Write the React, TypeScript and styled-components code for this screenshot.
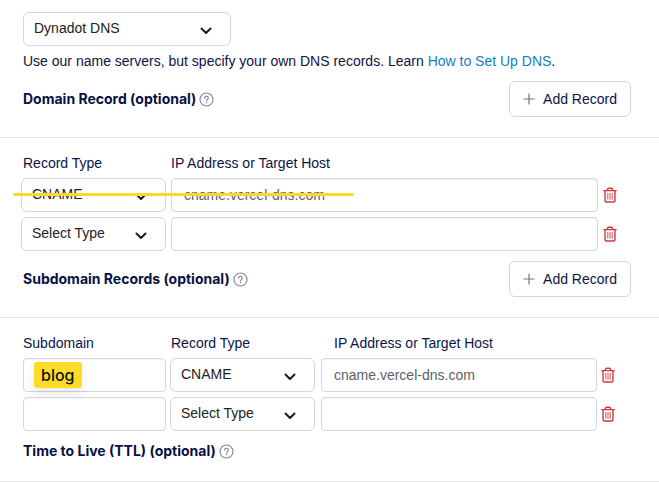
import React from "react";
import styled, { createGlobalStyle } from "styled-components";

const GlobalStyle = createGlobalStyle`
  *, *::before, *::after { box-sizing: border-box; }
  body {
    margin: 0;
    background: #fff;
    color: #0b1446;
    font: 14px/20px "Liberation Sans", Arial, sans-serif;
  }
  button, input, select { font: inherit; }
`;

const Page = styled.main`
  display: flow-root;
`;

const Section = styled.section<{ $top: number; $bottom: number }>`
  padding: ${(p) => p.$top}px 28px ${(p) => p.$bottom}px 23px;
  border-bottom: 1px solid #e2e4e7;
`;

const Help = styled.p`
  margin: 5px 0 10px;
  white-space: nowrap;
`;

const Link = styled.a`
  color: #1580bd;
  text-decoration: none;
`;

const TitleBar = styled.div`
  display: flex;
  align-items: center;
  justify-content: space-between;
`;

const Title = styled.h2`
  display: flex;
  align-items: center;
  gap: 3px;
  margin: 0;
  font: 700 14px/20px Inter, sans-serif;
  color: #051244;
  white-space: nowrap;
`;

const HelpButton = styled.button`
  display: flex;
  padding: 0;
  border: 0;
  background: none;
  color: #858b9b;
`;

const AddButton = styled.button`
  display: flex;
  align-items: center;
  gap: 8px;
  height: 36px;
  padding: 0 13px;
  border: 1px solid #d3d8dc;
  border-radius: 6px;
  background: #fff;
  color: #0b1446;
  white-space: nowrap;
`;

const SelectBox = styled.span<{ $width?: number }>`
  display: grid;
  align-items: center;
  width: ${(p) => (p.$width ? `${p.$width}px` : "100%")};
  & > * { grid-area: 1 / 1; }
  & > svg {
    justify-self: end;
    margin: 3px 19px 0 0;
    pointer-events: none;
  }
`;

const Select = styled.select`
  appearance: none;
  width: 100%;
  height: 34px;
  padding: 0 36px 2px 10px;
  border: 1px solid #d3d8dc;
  border-radius: 6px;
  background: #fff;
  color: #222;
`;

const Field = styled.input`
  width: 100%;
  min-width: 0;
  height: 34px;
  padding: 0 12px;
  border: 1px solid #d3d8dc;
  border-radius: 4px;
  background: #fff;
  box-shadow: inset 0 1px 1px #0000000d;
  color: #5c5f66;
`;

const Records = styled.div`
  display: grid;
  row-gap: 5px;
  margin-bottom: 10px;
`;

const DomainRow = styled.div`
  position: relative;
  display: grid;
  grid-template-columns: 145px 1fr 14px;
  column-gap: 5px;
  align-items: center;
  margin: 0 14px 0 -2px;
`;

const SubdomainRow = styled.div`
  display: grid;
  grid-template-columns: 143px 145px 1fr 14px;
  column-gap: 4px;
  align-items: center;
  margin-right: 16px;
  & > :nth-child(3) { margin-left: 2px; width: calc(100% - 2px); }
`;

const Labels = styled.div<{ $columns: string }>`
  display: grid;
  grid-template-columns: ${(p) => p.$columns};
  margin-bottom: 5px;
`;

const DeleteButton = styled.button`
  display: flex;
  padding: 0;
  border: 0;
  background: none;
  color: #cf3a40;
`;

const StrikeMark = styled.span`
  position: absolute;
  left: -8px;
  top: 15px;
  width: 341px;
  height: 3px;
  border-radius: 2px;
  background: #fbd72f;
  pointer-events: none;
`;

const MarkedCell = styled.span`
  position: relative;
`;

const Highlight = styled.mark`
  position: absolute;
  left: 11px;
  top: 4px;
  padding: 1px 7px;
  border-radius: 3px;
  background: #ffdd26;
  box-shadow: 0 8px 12px #00000014;
  color: #111;
  font: 500 16px/24px Inter, sans-serif;
  pointer-events: none;
`;

const Chevron = () => (
  <svg width="12" height="8" viewBox="0 0 12 8" fill="none" stroke="#1d1d1f" strokeWidth="2" strokeLinecap="round" strokeLinejoin="round" aria-hidden="true">
    <path d="M1.5 1.5 6 6l4.500-4.500" />
  </svg>
);

const Plus = () => (
  <svg width="12" height="12" viewBox="0 0 12 12" stroke="#70768b" strokeWidth="1.200" aria-hidden="true">
    <path d="M6 .5v11M.5 6h11" />
  </svg>
);

const Question = () => (
  <svg width="15" height="15" viewBox="0 0 15 15" fill="none" stroke="currentColor" strokeLinecap="round" aria-hidden="true">
    <circle cx="7.500" cy="7.500" r="6.500" strokeWidth="1.200" />
    <path d="M5.700 6.100a1.800 1.800 0 1 1 2.900 1.400c-.7.500-1.100.8-1.100 1.400" strokeWidth="1.200" />
    <circle cx="7.500" cy="10.700" r=".4" fill="currentColor" strokeWidth=".5" />
  </svg>
);

const Trash = () => (
  <svg width="14" height="16" viewBox="0 0 14 16" fill="none" stroke="currentColor" strokeLinecap="round" strokeLinejoin="round" aria-hidden="true">
    <path d="M.8 3.600h12.400M4.300 3.400c0-1.400.7-2.200 1.600-2.200h2.200c.9 0 1.600.8 1.600 2.200M2 3.800v9.700c0 .9.6 1.500 1.500 1.500h7c.9 0 1.500-.6 1.500-1.500V3.800" strokeWidth="1.400" />
    <path d="M4.800 6.300v6M7 6.300v6M9.200 6.300v6" strokeWidth=".9" />
  </svg>
);

type DropdownProps = { label: string; value: string; options: string[]; width?: number };

const Dropdown = ({ label, value, options, width }: DropdownProps) => (
  <SelectBox $width={width}>
    <Select aria-label={label} defaultValue={value}>
      {options.map((option) => (
        <option key={option}>{option}</option>
      ))}
    </Select>
    <Chevron />
  </SelectBox>
);

const recordTypes = ["Select Type", "CNAME"];

const SectionTitle = ({ children }: { children: string }) => (
  <Title>
    {children}
    <HelpButton type="button" aria-label={`About ${children}`}>
      <Question />
    </HelpButton>
  </Title>
);

const AddRecord = () => (
  <AddButton type="button">
    <Plus />
    Add Record
  </AddButton>
);

const Delete = () => (
  <DeleteButton type="button" aria-label="Delete record">
    <Trash />
  </DeleteButton>
);

const records = [
  { type: "CNAME", host: "cname.vercel-dns.com", marked: true },
  { type: "Select Type", host: "", marked: false },
];

export default function App() {
  return (
    <>
      <GlobalStyle />
      <Page>
        <Section $top={12} $bottom={20}>
          <Dropdown label="Name server" value="Dynadot DNS" options={["Dynadot DNS"]} width={208} />
          <Help>
            Use our name servers, but specify your own DNS records. Learn <Link href="#dns">How to Set Up DNS</Link>.
          </Help>
          <TitleBar>
            <SectionTitle>Domain Record (optional)</SectionTitle>
            <AddRecord />
          </TitleBar>
        </Section>

        <Section $top={15} $bottom={20}>
          <Labels $columns="148px 1fr">
            <span>Record Type</span>
            <span>IP Address or Target Host</span>
          </Labels>
          <Records>
            {records.map((record) => (
              <DomainRow key={record.type}>
                <Dropdown label="Record Type" value={record.type} options={recordTypes} />
                <Field aria-label="IP Address or Target Host" defaultValue={record.host} />
                <Delete />
                {record.marked && <StrikeMark />}
              </DomainRow>
            ))}
          </Records>
          <TitleBar>
            <SectionTitle>Subdomain Records (optional)</SectionTitle>
            <AddRecord />
          </TitleBar>
        </Section>

        <Section $top={15} $bottom={20}>
          <Labels $columns="148px 163px 1fr">
            <span>Subdomain</span>
            <span>Record Type</span>
            <span>IP Address or Target Host</span>
          </Labels>
          <Records>
            {records.map((record) => (
              <SubdomainRow key={record.type}>
                <MarkedCell>
                  <Field aria-label="Subdomain" />
                  {record.marked && <Highlight>blog</Highlight>}
                </MarkedCell>
                <Dropdown label="Record Type" value={record.type} options={recordTypes} />
                <Field aria-label="IP Address or Target Host" defaultValue={record.host} />
                <Delete />
              </SubdomainRow>
            ))}
          </Records>
          <SectionTitle>Time to Live (TTL) (optional)</SectionTitle>
        </Section>
      </Page>
    </>
  );
}
